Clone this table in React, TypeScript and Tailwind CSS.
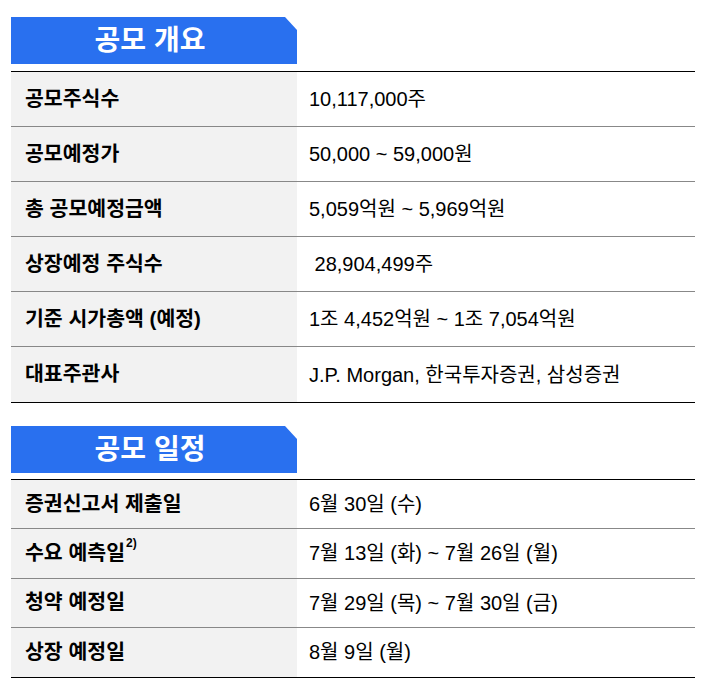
const overview = [
  { label: "공모주식수", value: "10,117,000주" },
  { label: "공모예정가", value: "50,000 ~ 59,000원" },
  { label: "총 공모예정금액", value: "5,059억원 ~ 5,969억원" },
  { label: "상장예정 주식수", value: "\u00a028,904,499주" },
  { label: "기준 시가총액 (예정)", value: "1조 4,452억원 ~ 1조 7,054억원" },
  { label: "대표주관사", value: "J.P. Morgan, 한국투자증권, 삼성증권" },
];

const schedule = [
  { label: "증권신고서 제출일", value: "6월 30일 (수)" },
  { label: "수요 예측일", sup: "2)", value: "7월 13일 (화) ~ 7월 26일 (월)" },
  { label: "청약 예정일", value: "7월 29일 (목) ~ 7월 30일 (금)" },
  { label: "상장 예정일", value: "8월 9일 (월)" },
];

type Row = { label: string; value: string; sup?: string };

function Section({ title, rows, rowClass, gapClass }: { title: string; rows: Row[]; rowClass: string; gapClass: string }) {
  return (
    <section>
      <div className="flex h-[47px] w-[286px] items-center justify-center bg-[#2970ef] pr-[8px] text-[28px] font-bold text-white [clip-path:polygon(0_0,calc(100%-12px)_0,100%_13px,100%_100%,0_100%)]">
        {title}
      </div>
      <div className={`${gapClass} border-t border-b border-black`}>
        {rows.map((r, i) => (
          <div
            key={r.label}
            className={`grid grid-cols-[286px_1fr] ${rowClass} ${i < rows.length - 1 ? "border-b border-[#888888]" : ""}`}
          >
            <div className="flex items-center bg-[#f2f2f2] pl-[14px] text-[20.5px] font-bold text-black">
              {r.label}
              {r.sup && <sup className="ml-[1px] -translate-y-[4px] text-[12px] font-bold">{r.sup}</sup>}
            </div>
            <div className="flex items-center whitespace-pre pl-[12px] text-[20px] text-black">{r.value}</div>
          </div>
        ))}
      </div>
    </section>
  );
}

export default function App() {
  return (
    <div className="min-h-[686px] bg-white px-[11px] pt-[17px] font-['Liberation_Sans','Noto_Sans_CJK_KR',sans-serif]">
      <div className="w-[684px]">
        <Section title="공모 개요" rows={overview} rowClass="h-[55px]" gapClass="mt-[7px]" />
        <div className="h-[23px]" />
        <Section title="공모 일정" rows={schedule} rowClass="h-[49.25px]" gapClass="mt-[6px]" />
      </div>
    </div>
  );
}
